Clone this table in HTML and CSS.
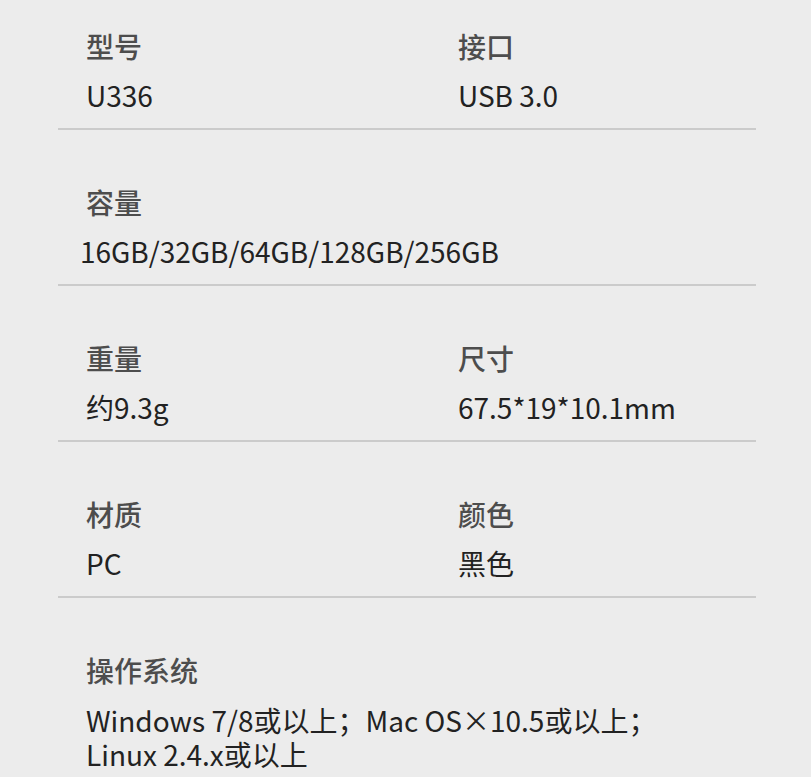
FILE: index.html
```html
<!DOCTYPE html>
<html lang="zh-CN">

<head>
    <meta charset="UTF-8">
    <meta name="viewport" content="width=device-width, initial-scale=1.0">
    <title>产品参数</title>
    <link rel="stylesheet" href="styles.css">
</head>

<body>
    <div class="specs">
        <div class="row">
            <div class="cell">
                <div class="label">型号</div>
                <div class="value">U336</div>
            </div>
            <div class="cell">
                <div class="label">接口</div>
                <div class="value">USB 3.0</div>
            </div>
        </div>
        <div class="row">
            <div class="cell">
                <div class="label">容量</div>
                <div class="value wide">16GB/32GB/64GB/128GB/256GB</div>
            </div>
        </div>
        <div class="row">
            <div class="cell">
                <div class="label">重量</div>
                <div class="value">约9.3g</div>
            </div>
            <div class="cell">
                <div class="label">尺寸</div>
                <div class="value">67.5*19*10.1mm</div>
            </div>
        </div>
        <div class="row">
            <div class="cell">
                <div class="label">材质</div>
                <div class="value">PC</div>
            </div>
            <div class="cell">
                <div class="label">颜色</div>
                <div class="value">黑色</div>
            </div>
        </div>
        <div class="row last">
            <div class="cell">
                <div class="label">操作系统</div>
                <div class="value multi">Windows 7/8或以上；Mac OS×10.5或以上；<br>Linux 2.4.x或以上</div>
            </div>
        </div>
    </div>
</body>

</html>
```

FILE: styles.css
```css
* {
    box-sizing: border-box;
    margin: 0;
    padding: 0;
}

body {
    font-family: 'Noto Sans CJK SC', 'Noto Sans', sans-serif;
    background: #ececec;
    height: 100vh;
    overflow: hidden;
}

.specs {
    width: 698px;
    margin-left: 58px;
    margin-top: -26px;
}

.row {
    display: grid;
    grid-template-columns: 372px 1fr;
    padding: 56px 0 17px 28px;
    border-bottom: 2px solid #cbcbcb;
}

.row.last {
    border-bottom: none;
}

.label {
    font-size: 28px;
    line-height: 32px;
    font-weight: 500;
    color: #4d4d4d;
    margin-bottom: 17px;
}

.value {
    font-size: 28px;
    line-height: 32px;
    color: #222;
    white-space: nowrap;
}

.value.wide {
    margin-left: -6px;
}

.value.multi {
    line-height: 34px;
}
```
